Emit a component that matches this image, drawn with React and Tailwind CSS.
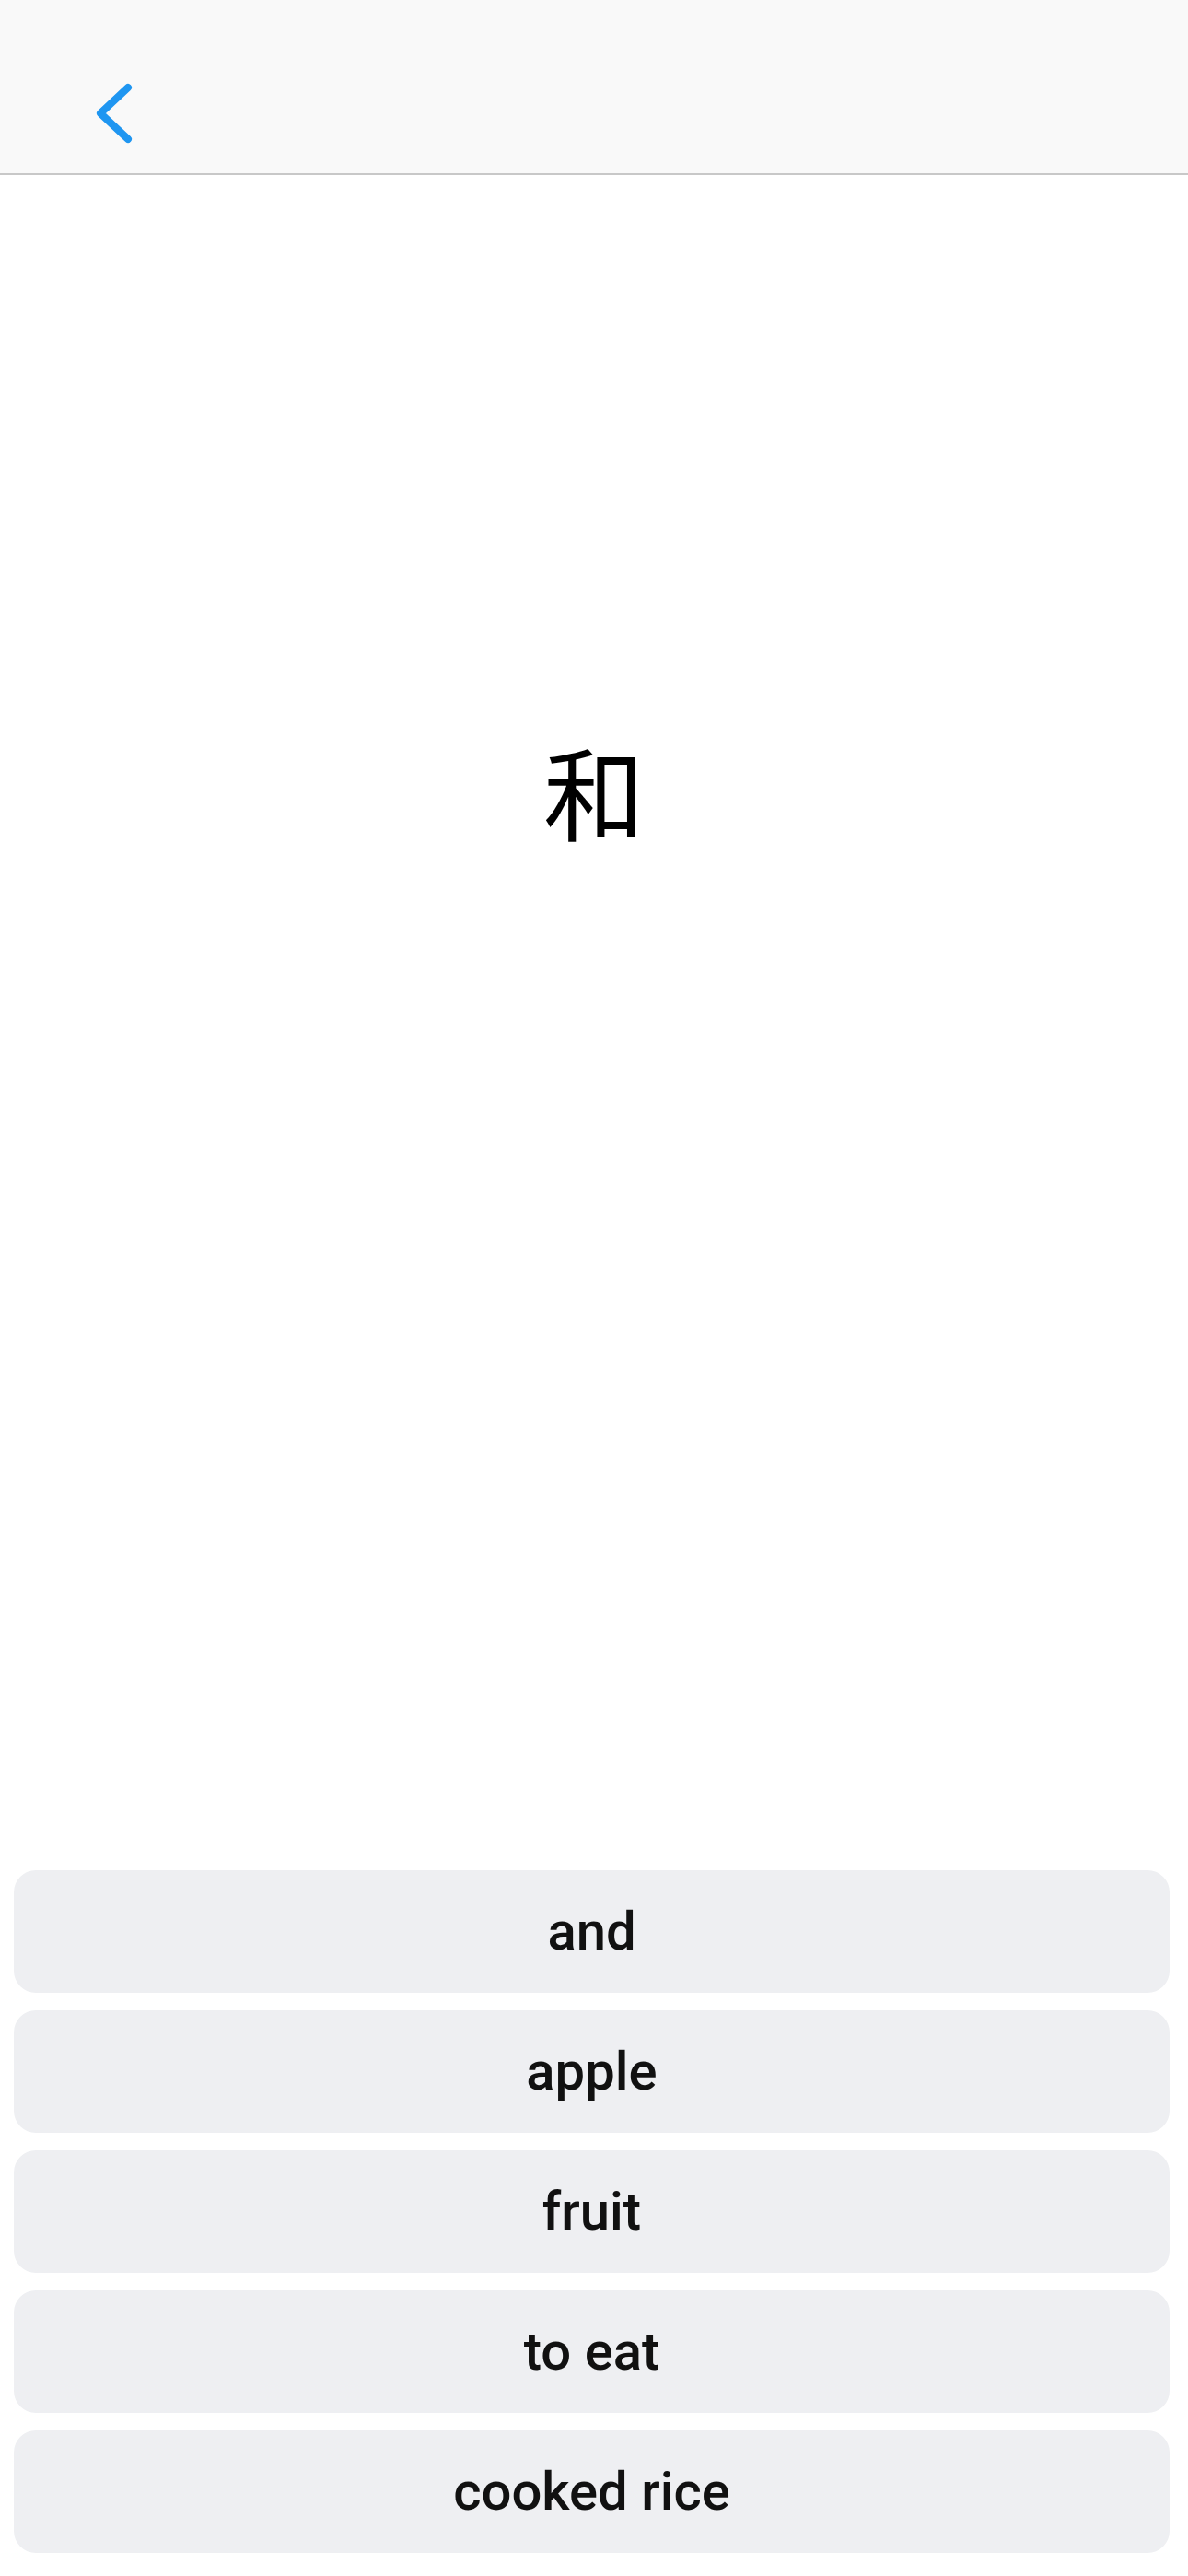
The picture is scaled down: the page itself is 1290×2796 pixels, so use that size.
import React from 'react';

const answers = ['and', 'apple', 'fruit', 'to eat', 'cooked rice'];

const BackIcon = () => (
  <svg width="44" height="70" viewBox="0 0 44 70" fill="none">
    <path
      d="M37 7 L7 35 L37 63"
      stroke="#1f96f1"
      strokeWidth="8"
      strokeLinecap="round"
      strokeLinejoin="round"
    />
  </svg>
);

export default function App() {
  return (
    <div className="h-[2796px] flex flex-col bg-white" style={{ fontFamily: 'Roboto, "Noto Sans", sans-serif' }}>
      <header className="h-[190px] shrink-0 bg-[#f9f9f9] border-b-2 border-[#c8c8c8] flex items-start pl-[102px] pt-[88px]">
        <button aria-label="Back">
          <BackIcon />
        </button>
      </header>

      <main className="flex-1 flex flex-col">
        <div
          className="pt-[612px] text-center text-[110px] leading-none text-black"
          style={{ fontFamily: '"Noto Sans CJK JP", "Noto Sans CJK SC", sans-serif' }}
        >
          和
        </div>
      </main>

      <div className="flex flex-col gap-[19px] pl-[15px] pr-[20px] pb-[25px]">
        {answers.map((a) => (
          <button
            key={a}
            className="h-[133px] w-full rounded-[24px] bg-[#eeeff2] flex items-center justify-center text-[58px] text-[#111111] font-medium"
          >
            {a}
          </button>
        ))}
      </div>
    </div>
  );
}
